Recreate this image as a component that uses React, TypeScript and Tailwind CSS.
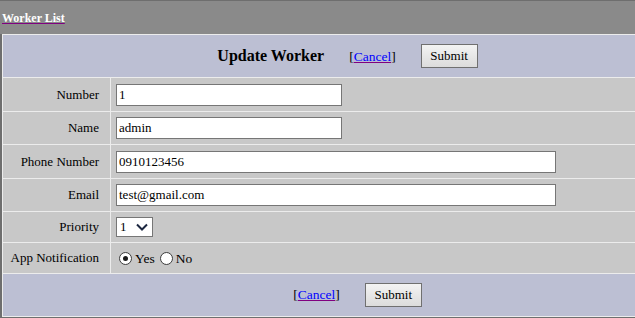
const labelCell = "bg-[#c8c8c8] flex items-center justify-end pr-[11px] text-[13px] text-black";
const valueCell = "bg-[#c8c8c8] flex items-center pl-[5px]";

const Field = ({ value, width }: { value: string; width: string }) => (
  <div
    className={`${width} h-[22px] border border-[#767676] bg-white flex items-center px-[2px] text-[13px] text-black`}
  >
    {value}
  </div>
);

const SubmitButton = () => (
  <button className="w-[57px] h-[24px] border border-[#707070] bg-gradient-to-b from-[#f3f3f3] to-[#dcdcdc] text-[13px] text-black flex items-center justify-center">
    Submit
  </button>
);

const CancelLink = () => (
  <span className="text-[13.5px] text-black">
    [<a className="text-[#0000ff] underline decoration-[#800080] cursor-pointer">Cancel</a>]
  </span>
);

const Radio = ({ checked, label }: { checked?: boolean; label: string }) => (
  <span className="flex items-center">
    <span className="w-[13px] h-[13px] rounded-full border border-[#3c3c3c] bg-white flex items-center justify-center">
      {checked && <span className="w-[5px] h-[5px] rounded-full bg-[#1a1a1a]" />}
    </span>
    <span className="ml-[3px] mt-[3px] text-[13.5px] text-black">{label}</span>
  </span>
);

export default function App() {
  return (
    <div className="w-[635px] h-[318px] overflow-hidden font-[family-name:'Liberation_Serif',serif]">
      <div className="h-[34px] border-t border-[#6e6e6e] bg-[#8a8a8a] flex items-center pl-[2px]">
        <a className="text-[12px] font-bold text-white underline decoration-[#800080]">Worker List</a>
      </div>

      <div className="w-[712px] border-l-2 border-b border-[#6e6e6e] bg-[#ececec] pt-px pb-px pl-px grid grid-cols-[107px_1fr] grid-rows-[42px_33px_32px_33px_32px_30px_30px_42px] gap-px">
        <div className="col-span-2 bg-[#bcbfd3] flex items-center justify-center pr-[20px]">
          <span className="text-[16px] font-bold text-black">Update Worker</span>
          <span className="ml-[25px]">
            <CancelLink />
          </span>
          <span className="ml-[25px]">
            <SubmitButton />
          </span>
        </div>

        <div className={labelCell}>Number</div>
        <div className={valueCell}>
          <Field value="1" width="w-[226px]" />
        </div>

        <div className={labelCell}>Name</div>
        <div className={valueCell}>
          <Field value="admin" width="w-[226px]" />
        </div>

        <div className={labelCell}>Phone Number</div>
        <div className={valueCell}>
          <Field value="0910123456" width="w-[440px]" />
        </div>

        <div className={labelCell}>Email</div>
        <div className={valueCell}>
          <Field value="test@gmail.com" width="w-[440px]" />
        </div>

        <div className={labelCell}>Priority</div>
        <div className={valueCell}>
          <div className="w-[37px] h-[20px] border border-[#767676] bg-white flex items-center justify-between pl-[3px] pr-[4px] text-[13px] text-black">
            <span>1</span>
            <svg width="12" height="8" viewBox="0 0 12 8">
              <polyline points="1,1.5 6,6.5 11,1.5" fill="none" stroke="#1c2740" strokeWidth="2" />
            </svg>
          </div>
        </div>

        <div className={labelCell}>App Notification</div>
        <div className="bg-[#c8c8c8] flex items-center pl-[8px] gap-[5px]">
          <Radio checked label="Yes" />
          <Radio label="No" />
        </div>

        <div className="col-span-2 bg-[#bcbfd3] flex items-center justify-center">
          <CancelLink />
          <span className="ml-[25px]">
            <SubmitButton />
          </span>
        </div>
      </div>
    </div>
  );
}
